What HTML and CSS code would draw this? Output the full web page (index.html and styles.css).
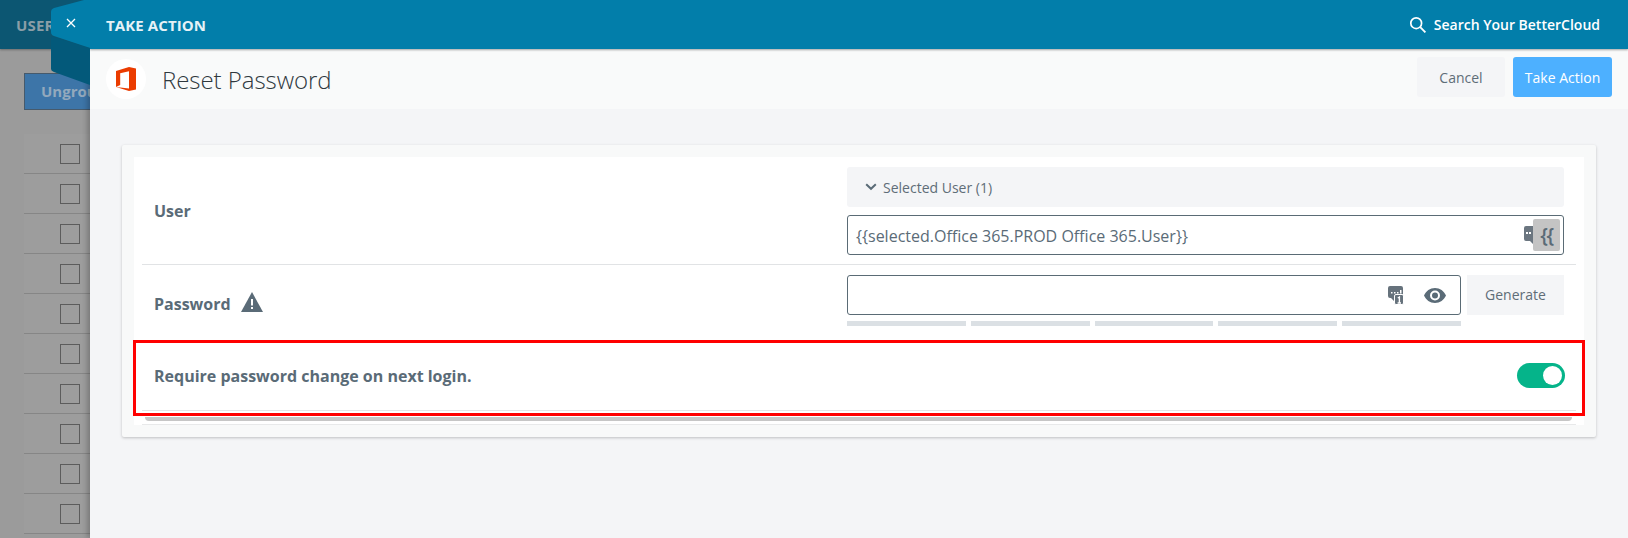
FILE: index.html
```html
<!DOCTYPE html>
<html lang="en">
<head>
<meta charset="utf-8">
<title>Take Action</title>
<link rel="stylesheet" href="styles.css">
</head>
<body>
<div class="backdrop">
  <div class="topbar">USERS</div>
  <div class="toolbar"><span class="ungroup">Ungroup</span></div>
  <div class="table">
    <div class="tr"><span class="cb"></span></div>
    <div class="tr"><span class="cb"></span></div>
    <div class="tr"><span class="cb"></span></div>
    <div class="tr"><span class="cb"></span></div>
    <div class="tr"><span class="cb"></span></div>
    <div class="tr"><span class="cb"></span></div>
    <div class="tr"><span class="cb"></span></div>
    <div class="tr"><span class="cb"></span></div>
    <div class="tr"><span class="cb"></span></div>
    <div class="tr"><span class="cb"></span></div>
  </div>
</div>

<section class="panel">
  <svg class="tab" width="40" height="86" viewBox="0 0 40 86">
    <path d="M39 48 L3 37 Q0 36 0 39 L0 69 Q0 71 3 72 L39 85 Z" fill="#03597a"/>
    <path d="M39 0 L33 0 L3 8 Q0 9 0 12 L0 32 Q0 35 3 36 L39 48 Z" fill="#027eaa"/>
    <path d="M16 19 L24 27 M24 19 L16 27" stroke="#fff" stroke-width="1.3" fill="none"/>
  </svg>

  <header class="head">
    <span class="head-title">TAKE ACTION</span>
    <span class="search">
      <svg width="18" height="18" viewBox="0 0 18 18"><circle cx="7.2" cy="7.2" r="5.4" fill="none" stroke="#fff" stroke-width="1.7"/><path d="M11.2 11.2 L16.4 16.4" stroke="#fff" stroke-width="1.9"/></svg>
      Search Your BetterCloud
    </span>
  </header>

  <div class="titlebar">
    <span class="logo">
      <svg width="20" height="24" viewBox="0 0 20 24"><path fill="#eb3c00" fill-rule="evenodd" d="M0 3.9 L13 0 L20 1.6 L20 22.4 L13 24 L0 20 L13 21.6 L13 4.2 L4.2 6.2 L4.2 18 L0 20 Z"/></svg>
    </span>
    <h1 class="title">Reset Password</h1>
    <div class="actions">
      <button class="btn btn-cancel">Cancel</button>
      <button class="btn btn-primary">Take Action</button>
    </div>
  </div>

  <div class="card">
    <div class="inner">
      <div class="row row-user">
        <div class="label">User</div>
        <div class="field">
          <div class="selected">
            <svg width="12" height="8" viewBox="0 0 12 8"><path d="M1.2 1.2 L6 5.8 L10.8 1.2" fill="none" stroke="#5a6b77" stroke-width="2"/></svg>
            <span>Selected User (1)</span>
          </div>
          <div class="input input-user">
            <span class="input-value">{{selected.Office 365.PROD Office 365.User}}</span>
            <svg class="bubble-small" width="9" height="18" viewBox="0 0 9 18"><path fill="#6b7680" d="M2 0 H9 V18 L6 15 H2 Q0 15 0 13 V2 Q0 0 2 0 Z"/><rect x="2" y="6" width="2" height="2" fill="#fff"/><rect x="5" y="6" width="2" height="2" fill="#fff"/></svg>
            <span class="braces">{{</span>
          </div>
        </div>
      </div>
      <div class="row row-pass">
        <div class="label">Password
          <svg class="warn" width="22" height="20" viewBox="0 0 22 20"><path fill="#5a6b77" d="M11 0 L22 20 H0 Z"/><rect x="10" y="7" width="2" height="6.5" fill="#fff"/><rect x="10" y="15" width="2" height="2" fill="#fff"/></svg>
        </div>
        <div class="field">
          <div class="pass-line">
            <div class="input input-pass">
              <svg width="16" height="19" viewBox="0 0 16 19"><path fill="#66727c" d="M2 0 H13 Q15 0 15 2 V10 H8 V15 H6 L3 12 H2 Q0 12 0 10 V2 Q0 0 2 0 Z"/><rect x="3" y="6" width="1.5" height="1.5" fill="#fff"/><rect x="6" y="6" width="1.5" height="1.5" fill="#fff"/><rect x="9" y="6" width="1.5" height="1.5" fill="#fff"/><rect x="12" y="4" width="1.5" height="3.5" fill="#fff"/><rect x="6.5" y="8.5" width="9" height="10" rx="1.5" fill="#66727c" stroke="#fff"/><path d="M9.8 12 L11.4 11 V17 M9.6 17 H13" stroke="#fff" stroke-width="1.4" fill="none"/></svg>
              <svg class="eye" width="22" height="15" viewBox="0 0 22 15"><path fill="#5a6b77" fill-rule="evenodd" d="M11 0 C16 0 20 3 22 7.5 C20 12 16 15 11 15 C6 15 2 12 0 7.5 C2 3 6 0 11 0 Z M11 2.5 A5 5 0 1 0 11 12.5 A5 5 0 1 0 11 2.5 Z"/><circle cx="11" cy="7.5" r="3" fill="#5a6b77"/></svg>
            </div>
            <button class="btn-generate">Generate</button>
          </div>
          <div class="strength"><i></i><i></i><i></i><i></i><i></i></div>
        </div>
      </div>
      <div class="row row-toggle">
        <div class="label">Require password change on next login.</div>
        <span class="toggle"><span class="knob"></span></span>
      </div>
      <div class="grip-wrap"><div class="grip"></div></div>
      <div class="highlight"></div>
    </div>
  </div>
</section>
</body>
</html>
```
FILE: styles.css
```css
* { box-sizing: border-box; }
html, body { margin: 0; height: 100%; }
body {
  position: relative;
  width: 1628px;
  height: 538px;
  overflow: hidden;
  background: #9b9b9b;
  font-family: "Open Sans", "Noto Sans", sans-serif;
  color: #5a6b77;
}

/* dimmed page behind the panel */
.backdrop { height: 100%; }
.topbar {
  height: 49px;
  padding: 15px 0 0 16px;
  background: #0c5672;
  color: #8b9ea7;
  font-size: 15px;
  font-weight: 700;
  line-height: 20px;
  letter-spacing: .2px;
  box-shadow: 0 1px 2px rgba(0,0,0,.3);
}
.toolbar { padding: 24px 0 0 24px; height: 85px; }
.ungroup {
  display: block;
  width: 120px;
  height: 37px;
  padding-left: 16px;
  background: #3d75a8;
  border: 1px solid #465a6c;
  color: #93a9bd;
  font-size: 15px;
  font-weight: 700;
  line-height: 35px;
}
.table { margin-left: 24px; }
.tr {
  height: 40px;
  background: #9d9d9d;
  border-bottom: 1px solid #868686;
  padding: 10px 0 0 36px;
}
.cb { display: block; width: 20px; height: 20px; border: 1px solid #5c5c5c; }

/* panel */
.panel {
  position: absolute;
  left: 90px;
  top: 0;
  right: 0;
  bottom: 0;
  display: flex;
  flex-direction: column;
  background: #f4f5f7;
  box-shadow: -3px 0 5px rgba(0,0,0,.22);
}
.tab { position: absolute; left: -39px; top: 0; z-index: 2; }
.head {
  flex: none;
  height: 49px;
  display: flex;
  align-items: center;
  justify-content: space-between;
  padding: 0 28px 0 16px;
  background: #027eaa;
  color: #fff;
  box-shadow: 0 1px 2px rgba(0,0,0,.35);
  position: relative;
  z-index: 1;
}
.head-title { font-size: 15px; font-weight: 700; letter-spacing: .1px; color: #e6f2f7; }
.search { display: flex; align-items: center; gap: 7px; font-size: 14px; font-weight: 600; }
.titlebar {
  flex: none;
  height: 60px;
  display: flex;
  align-items: center;
  padding: 0 16px;
  background: #f9fafa;
}
.logo {
  flex: none;
  width: 40px;
  height: 40px;
  border-radius: 50%;
  background: #fff;
  display: flex;
  align-items: center;
  justify-content: center;
}
.title { margin: 0 0 0 16px; font-size: 24px; font-weight: 300; color: #2f383e; letter-spacing: -.05px; }
.actions { margin-left: auto; margin-bottom: 4px; display: flex; gap: 8px; }
.btn {
  height: 40px;
  border: 0;
  border-radius: 3px;
  font: 400 14px "Open Sans", sans-serif;
  padding: 0;
}
.btn-cancel { width: 88px; background: #f4f5f7; color: #5f6d78; }
.btn-primary { width: 99px; background: #4db0ff; color: #fff; }

.card {
  margin: 36px 32px 0;
  padding: 12px;
  height: 292px;
  background: #f8f9f9;
  border-radius: 2px;
  box-shadow: 0 1px 3px rgba(0,0,0,.22);
}
.inner { position: relative; height: 268px; background: #fff; padding: 0 8px; }
.row { display: flex; justify-content: space-between; }
.label { font-size: 16px; font-weight: 700; color: #5a6b77; padding-left: 12px; }
.field { width: 717px; margin-right: 12px; }
.row-user { height: 108px; padding-top: 10px; border-bottom: 1px solid #e1e3e5; }
.row-user .label { padding-top: 33px; }
.selected {
  height: 40px;
  display: flex;
  align-items: center;
  gap: 6px;
  padding-left: 18px;
  background: #f4f5f7;
  border-radius: 3px;
  font-size: 14px;
  color: #5f6d78;
}
.input {
  display: flex;
  align-items: center;
  height: 40px;
  background: #fff;
  border: 1px solid #5a6b75;
  border-radius: 3px;
}
.input-user { margin-top: 8px; padding: 0 3px 0 8px; font-size: 16px; color: #5a6b77; }
.input-value { flex: 1; padding-top: 1px; }
.bubble-small { flex: none; }
.braces {
  flex: none;
  width: 27px;
  height: 32px;
  background: #c4c4c4;
  border-radius: 2px;
  text-align: center;
  font-size: 20px;
  font-weight: 600;
  line-height: 32px;
  letter-spacing: -1.5px;
  color: #5a6b77;
}
.row-pass { height: 76px; padding-top: 10px; }
.row-pass .label { padding-top: 17px; display: flex; gap: 10px; align-items: flex-start; line-height: 24px; }
.warn { margin-top: 0; }
.pass-line { display: flex; gap: 6px; }
.input-pass { width: 614px; justify-content: flex-end; gap: 20px; padding-right: 14px; }
.btn-generate {
  flex: none;
  width: 97px;
  height: 40px;
  padding: 0 0 2px;
  border: 0;
  background: #f4f5f7;
  color: #5f6d78;
  font: 400 14px "Open Sans", sans-serif;
}
.strength { display: flex; gap: 5px; width: 614px; margin-top: 6px; }
.strength i { flex: 1; height: 5px; background: #dbe0e4; }
.row-toggle {
  height: 70px;
  align-items: center;
  border-bottom: 1px solid #e4e5e7;
}
.toggle {
  display: block;
  width: 48px;
  height: 25px;
  margin-right: 11px;
  padding: 3px;
  border-radius: 13px;
  background: #05b48a;
}
.knob { display: block; width: 19px; height: 19px; margin-left: 23px; border-radius: 50%; background: #fff; }
.grip-wrap { height: 8px; margin-top: 6px; border-bottom: 1px solid #e8e9ea; }
.grip {
  height: 4px;
  margin: 0 4px 0 3px;
  background: #c6c6c6;
  border-radius: 0 0 4px 4px;
}
.highlight {
  position: absolute;
  left: -1px;
  right: -1px;
  top: 183px;
  height: 76px;
  border: 3px solid #ff0000;
}
```
